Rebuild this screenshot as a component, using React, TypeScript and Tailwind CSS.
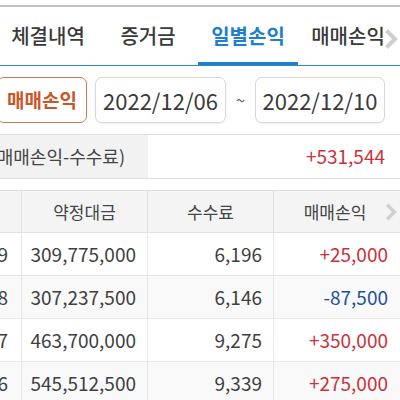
import React from 'react';

const tabs = ['체결내역', '증거금', '일별손익', '매매손익'];

const rows = [
  { day: '2022/12/09', amount: '309,775,000', fee: '6,196', pl: '+25,000' },
  { day: '2022/12/08', amount: '307,237,500', fee: '6,146', pl: '-87,500' },
  { day: '2022/12/07', amount: '463,700,000', fee: '9,275', pl: '+350,000' },
  { day: '2022/12/06', amount: '545,512,500', fee: '9,339', pl: '+275,000' },
];

const Chevron = ({ className }: { className: string }) => (
  <svg viewBox="0 0 14 22" className={className} fill="none">
    <path d="M2.5 2.5 L11 11 L2.5 19.5" stroke="currentColor" strokeWidth="4" strokeLinejoin="miter" />
  </svg>
);

const App: React.FC = () => {
  return (
    <div
      className="w-[400px] h-[400px] overflow-hidden bg-white text-[#444]"
      style={{ fontFamily: '"Noto Sans CJK KR", "Noto Sans", sans-serif' }}
    >
      {/* top edge */}
      <div className="mt-[5px] h-[2px] bg-[#c2c2c2]" />

      {/* tabs */}
      <div className="relative flex h-[59px] -ml-[2px] border-b border-[#2a86d1]">
        {tabs.map((t, i) => (
          <div
            key={t}
            className={`w-[100px] shrink-0 flex items-center justify-center pt-[3px] text-[20px] border-b-[3px] ${
              i === 2 ? 'border-[#1f7fcf] text-[#1f7fcf] font-bold' : 'border-transparent text-[#3a3a3a] font-medium'
            }`}
          >
            {t}
          </div>
        ))}
        <Chevron className="absolute right-[2px] top-[21px] w-[14px] h-[22px] text-[#cfcfcf]" />
      </div>

      {/* filter */}
      <div className="flex items-center h-[68px]">
        <div className="-ml-[3px] w-[90px] h-[46px] shrink-0 flex items-center justify-center rounded-[7px] border border-[#cf7a52] text-[#c8582a] text-[19px] font-bold">
          매매손익
        </div>
        <div className="ml-[8px] w-[131px] h-[46px] flex items-center justify-center rounded-[7px] border border-[#d9d9d9] shadow-[0_1px_2px_rgba(0,0,0,0.08)] text-[22px] text-[#3a3a3a]">
          2022/12/06
        </div>
        <div className="w-[29px] text-center text-[17px] text-[#666]">~</div>
        <div className="w-[130px] h-[46px] flex items-center justify-center rounded-[7px] border border-[#d9d9d9] shadow-[0_1px_2px_rgba(0,0,0,0.08)] text-[22px] text-[#3a3a3a]">
          2022/12/10
        </div>
      </div>

      {/* summary */}
      <div className="flex h-[45px] border-y border-[#dedede]">
        <div className="w-[148px] bg-[#f2f2f2] overflow-hidden flex items-center justify-end pr-[23px] whitespace-nowrap text-[18px] text-[#444]">
          실현손익(매매손익-수수료)
        </div>
        <div className="flex-1 flex items-center justify-end pr-[15px] text-[19px] text-[#c9323b]">+531,544</div>
      </div>

      {/* table */}
      <div className="mt-[11px] border-t border-[#e0e0e0]">
        <div className="relative flex h-[42px] bg-[#f4f4f4] border-b border-[#e0e0e0] text-[17px] text-[#444]">
          <div className="w-[22px] border-r border-[#e0e0e0]" />
          <div className="w-[126px] flex items-center justify-center border-r border-[#e0e0e0]">약정대금</div>
          <div className="w-[126px] flex items-center justify-center border-r border-[#e0e0e0]">수수료</div>
          <div className="flex-1 flex items-center justify-center pr-[4px]">매매손익</div>
          <Chevron className="absolute right-[3px] top-[11px] w-[12px] h-[20px] text-[#d0d0d0]" />
        </div>
        {rows.map((r, i) => (
          <div
            key={r.day}
            className={`flex h-[43px] border-b border-[#e6e6e6] text-[19px] text-[#3f3f3f] ${
              i % 2 === 1 ? 'bg-[#f9f9f9]' : 'bg-white'
            }`}
          >
            <div className="w-[22px] overflow-hidden flex items-center justify-end pr-[13px] whitespace-nowrap border-r border-[#e6e6e6]">
              {r.day}
            </div>
            <div className="w-[126px] flex items-center justify-end pr-[11px] border-r border-[#e6e6e6]">{r.amount}</div>
            <div className="w-[126px] flex items-center justify-end pr-[11px] border-r border-[#e6e6e6]">{r.fee}</div>
            <div
              className={`flex-1 flex items-center justify-end pr-[12px] ${
                r.pl.startsWith('-') ? 'text-[#1f4f9c]' : 'text-[#c9323b]'
              }`}
            >
              {r.pl}
            </div>
          </div>
        ))}
      </div>
    </div>
  );
};

export default App;
